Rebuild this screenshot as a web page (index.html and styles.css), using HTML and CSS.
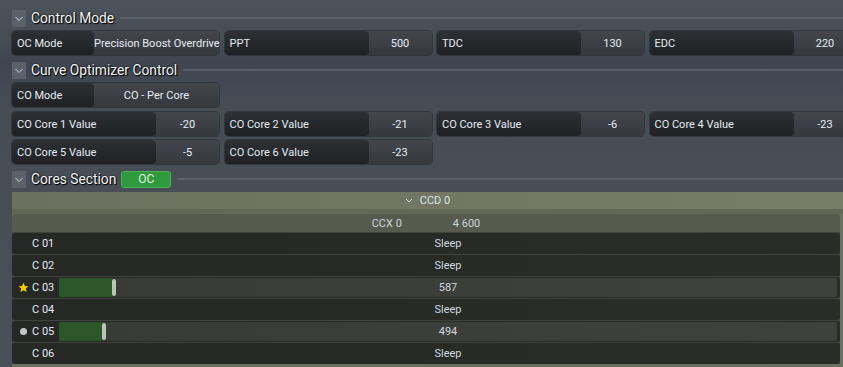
FILE: index.html
```html
<!DOCTYPE html>
<html lang="en">
<head>
    <meta charset="UTF-8">
    <title>Cores</title>
    <link rel="stylesheet" href="styles.css">
</head>
<body>
    <div class="page">
        <div class="sec-head">
            <span class="chev"><svg width="14" height="17" viewBox="0 0 14 17"><path d="M3.5 7 L7 10.5 L10.5 7" fill="none" stroke="#d2d6da" stroke-width="1"/></svg></span>
            <span class="sec-title">Control Mode</span>
            <span class="sec-line"></span>
        </div>
        <div class="grid">
            <div class="field short"><span class="f-label">OC Mode</span><span class="f-val">Precision Boost Overdrive</span></div>
            <div class="field"><span class="f-label">PPT</span><span class="f-val">500</span></div>
            <div class="field"><span class="f-label">TDC</span><span class="f-val">130</span></div>
            <div class="field"><span class="f-label">EDC</span><span class="f-val">220</span></div>
        </div>

        <div class="sec-head">
            <span class="chev"><svg width="14" height="17" viewBox="0 0 14 17"><path d="M3.5 7 L7 10.5 L10.5 7" fill="none" stroke="#d2d6da" stroke-width="1"/></svg></span>
            <span class="sec-title">Curve Optimizer Control</span>
            <span class="sec-line"></span>
        </div>
        <div class="grid">
            <div class="field short"><span class="f-label">CO Mode</span><span class="f-val">CO - Per Core</span></div>
        </div>
        <div class="grid">
            <div class="field"><span class="f-label">CO Core 1 Value</span><span class="f-val">-20</span></div>
            <div class="field"><span class="f-label">CO Core 2 Value</span><span class="f-val">-21</span></div>
            <div class="field"><span class="f-label">CO Core 3 Value</span><span class="f-val">-6</span></div>
            <div class="field"><span class="f-label">CO Core 4 Value</span><span class="f-val">-23</span></div>
            <div class="field"><span class="f-label">CO Core 5 Value</span><span class="f-val">-5</span></div>
            <div class="field"><span class="f-label">CO Core 6 Value</span><span class="f-val">-23</span></div>
        </div>

        <div class="sec-head">
            <span class="chev"><svg width="14" height="17" viewBox="0 0 14 17"><path d="M3.5 7 L7 10.5 L10.5 7" fill="none" stroke="#d2d6da" stroke-width="1"/></svg></span>
            <span class="sec-title">Cores Section</span>
            <span class="badge">OC</span>
            <span class="sec-line"></span>
        </div>

        <div class="ccd">
            <div class="ccd-head">
                <svg width="8" height="5" viewBox="0 0 8 5"><path d="M1 1 L4 4 L7 1" fill="none" stroke="#d8dee6" stroke-width="1"/></svg>
                <span>CCD 0</span>
            </div>
            <div class="ccd-body">
                <div class="ccx-head"><span>CCX 0</span><span>4 600</span></div>
                <div class="cores">
                    <div class="core"><span class="mark"></span><span class="c-name">C 01</span><div class="bar"><span class="val">Sleep</span></div></div>
                    <div class="core"><span class="mark"></span><span class="c-name">C 02</span><div class="bar"><span class="val">Sleep</span></div></div>
                    <div class="core"><span class="mark"><svg width="11" height="11" viewBox="0 0 24 24"><path d="M12 1.5l3.2 7 7.6.8-5.7 5.1 1.6 7.5L12 18l-6.7 3.9 1.6-7.5L1.2 9.3l7.6-.8z" fill="#f6c800"/></svg></span><span class="c-name">C 03</span><div class="bar track"><span class="fill" style="width:53px"><i class="knob"></i></span><span class="val">587</span></div></div>
                    <div class="core"><span class="mark"></span><span class="c-name">C 04</span><div class="bar"><span class="val">Sleep</span></div></div>
                    <div class="core"><span class="mark"><i class="dot"></i></span><span class="c-name">C 05</span><div class="bar track"><span class="fill" style="width:43px"><i class="knob"></i></span><span class="val">494</span></div></div>
                    <div class="core"><span class="mark"></span><span class="c-name">C 06</span><div class="bar"><span class="val">Sleep</span></div></div>
                </div>
            </div>
        </div>
    </div>
</body>
</html>
```

FILE: styles.css
```css
body {
    margin: 0;
    font-family: Roboto, "Open Sans", sans-serif;
    font-size: 11px;
    color: #e4ebf3;
    background: linear-gradient(to bottom, #4d535a 0, #474d55 40px, #3f4650 62px, #474d55 110px, #4a5058 100%);
    height: 367px;
    overflow: hidden;
}
.page {
    padding: 9px 0 0 12px;
    display: flex;
    flex-direction: column;
}
.sec-head {
    display: flex;
    align-items: center;
    height: 18px;
    margin-bottom: 4px;
}
.chev {
    width: 14px;
    height: 17px;
    background-color: #5b6168;
    display: flex;
}
.sec-title {
    margin-left: 5px;
    font-size: 13.8px;
    color: #f2f4f6;
    text-shadow: 0 0 2px #000, 1px 1px 1px #000;
}
.sec-line {
    flex: 1;
    height: 2px;
    margin-left: 6px;
    background-color: #5a6068;
}
.badge {
    margin-left: 5px;
    width: 48px;
    height: 15px;
    line-height: 15px;
    text-align: center;
    background-color: #2f9a3d;
    border: 1px solid #49b257;
    border-radius: 3px;
    color: #dff3df;
    font-size: 12px;
}
.grid {
    display: grid;
    grid-template-columns: repeat(4, 207px);
    column-gap: 5.5px;
    row-gap: 4px;
    margin-bottom: 6px;
}
.grid + .grid {
    margin-top: -1px;
}
.field {
    display: flex;
    height: 24px;
    border-radius: 4px;
    background: linear-gradient(to bottom, #43474d, #35393e);
    box-shadow: 0 0 0 1px rgba(30, 33, 37, 0.5);
}
.f-label {
    flex: 0 0 144px;
    display: flex;
    align-items: center;
    padding-left: 5px;
    box-sizing: border-box;
    border-radius: 4px;
    background: linear-gradient(to bottom, #2d3034, #1f2124);
}
.field.short .f-label {
    flex-basis: 82px;
}
.f-val {
    flex: 1;
    display: flex;
    align-items: center;
    justify-content: center;
    white-space: nowrap;
}
.ccd {
    background-color: #6b705e;
    padding-bottom: 3px;
}
.ccd-head {
    height: 17px;
    display: flex;
    align-items: center;
    justify-content: center;
    gap: 7px;
    color: #dde3ea;
    background: linear-gradient(to right, #6b715e, #787d68);
    border-bottom: 5px solid #636856;
}
.ccd-body {
    padding-right: 3px;
}
.ccx-head {
    height: 18px;
    display: flex;
    align-items: center;
    justify-content: center;
    gap: 51px;
    color: #cdd4dc;
    background-color: #575b4d;
    border-radius: 4px 4px 0 0;
}
.cores {
    display: flex;
    flex-direction: column;
    gap: 1px;
    background-color: #41443d;
    padding-top: 1px;
}
.core {
    height: 21px;
    display: flex;
    align-items: center;
    padding-right: 3px;
    background: linear-gradient(to right, #262825, #2a2c28);
    border-radius: 3px;
}
.core:last-child {
    border-radius: 3px 3px 4px 4px;
}
.mark {
    width: 14px;
    margin-left: 4px;
    display: flex;
    justify-content: center;
    align-items: center;
}
.dot {
    width: 7px;
    height: 7px;
    border-radius: 50%;
    background-color: #c6c8c6;
}
.c-name {
    width: 27px;
    margin-left: 2px;
    color: #e0e8f2;
}
.bar {
    flex: 1;
    height: 19px;
    display: grid;
    border-radius: 2px;
}
.bar.track {
    background: linear-gradient(to right, #393b37, #3f413c);
}
.fill, .val {
    grid-area: 1 / 1;
}
.fill {
    display: flex;
    justify-content: flex-end;
    align-items: center;
    background-color: #2e562b;
    border-radius: 2px 0 0 2px;
}
.knob {
    width: 4px;
    height: 17px;
    margin-right: -4px;
    border-radius: 2px;
    background-color: #b9c5b5;
}
.val {
    justify-self: center;
    align-self: center;
    color: #cfd7df;
}
```
